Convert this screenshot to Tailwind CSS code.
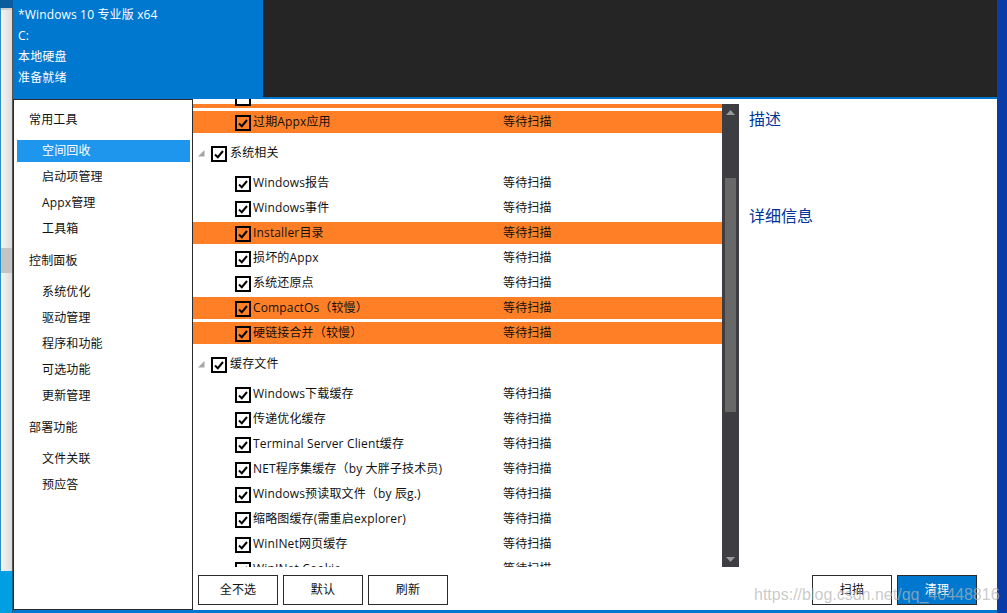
<!DOCTYPE html>
<html lang="zh">
<head>
  <meta charset="UTF-8">
  <title>Dism++</title>
  <script src="https://cdn.jsdelivr.net/npm/@tailwindcss/browser@4"></script>
</head>
<body class="bg-[#0078d0]">
  <div class="relative flex w-[1007px] h-[613px] overflow-hidden text-[12px] tracking-[0.15px] text-[#111] font-['Open_Sans','Noto_Sans_CJK_SC',sans-serif]">

    <!-- desktop behind, left edge -->
    <div class="w-[13px] flex flex-col">
      <div class="h-[8px] bg-[#0b5c9c]"></div>
      <div class="h-[563px] flex flex-col border-l border-r border-l-[#2a8fc4] border-r-[#555]">
        <div class="h-[240px] bg-gradient-to-r from-[#f4f4f4] to-[#dcdcdc] border-t-2 border-[#cfcfcf]"></div>
        <div class="h-[25px] bg-[#c4c4c4]"></div>
        <div class="flex-1 bg-gradient-to-r from-[#f4f4f4] to-[#dcdcdc]"></div>
      </div>
      <div class="flex-1 bg-[#009fe3] border-r border-[#1c5f80]"></div>
    </div>

    <div class="w-[984px] flex flex-col">
      <!-- header -->
      <div class="h-[99px] flex">
        <div class="w-[250px] bg-[#0078d0] text-white pl-[5px] pt-[4px]">
          <div class="h-[21px] leading-[21px]">*Windows 10 专业版 x64</div>
          <div class="h-[21px] leading-[21px]">C:</div>
          <div class="h-[21px] leading-[21px]">本地硬盘</div>
          <div class="h-[21px] leading-[21px]">准备就绪</div>
        </div>
        <div class="flex-1 bg-[#252525] border-b-2 border-[#0078d0]"></div>
      </div>

      <div class="h-[511px] flex bg-white">
        <!-- sidebar -->
        <div class="w-[180px] border border-[#2b2b2b] pt-[7px]">
          <div class="h-[26px] leading-[26px] pl-[15px] mb-[5px]">常用工具</div>
          <div class="h-[26px] py-[2px] pl-[3px] pr-[2px]"><div class="h-[22px] leading-[22px] pl-[25px] bg-[#1f96ee] text-white">空间回收</div></div>
          <div class="h-[26px] leading-[26px] pl-[28px]">启动项管理</div>
          <div class="h-[26px] leading-[26px] pl-[28px]">Appx管理</div>
          <div class="h-[26px] leading-[26px] pl-[28px]">工具箱</div>
          <div class="h-[26px] leading-[26px] pl-[15px] mt-[6px] mb-[5px]">控制面板</div>
          <div class="h-[26px] leading-[26px] pl-[28px]">系统优化</div>
          <div class="h-[26px] leading-[26px] pl-[28px]">驱动管理</div>
          <div class="h-[26px] leading-[26px] pl-[28px]">程序和功能</div>
          <div class="h-[26px] leading-[26px] pl-[28px]">可选功能</div>
          <div class="h-[26px] leading-[26px] pl-[28px]">更新管理</div>
          <div class="h-[26px] leading-[26px] pl-[15px] mt-[6px] mb-[5px]">部署功能</div>
          <div class="h-[26px] leading-[26px] pl-[28px]">文件关联</div>
          <div class="h-[26px] leading-[26px] pl-[28px]">预应答</div>
        </div>

        <!-- main -->
        <div class="flex-1 flex flex-col">
          <div class="h-[468px] flex">
            <!-- tree list -->
            <div class="w-[529px] overflow-hidden">
              <div class="h-[5px] pl-[42px]"><div class="relative w-[16px] h-[7px] border-2 border-t-0 border-black"></div></div>
              <div class="h-[4px] mb-[3px] bg-[#ff7f27]"></div>

              <div class="h-[22px] mb-[3px] flex items-center bg-[#ff7f27]">
                <span class="ml-[42px] mt-[2px] w-[16px] h-[16px] border-2 border-black flex items-center justify-center"><svg width="12" height="12" viewBox="0 0 12 12" fill="none" stroke="#000" stroke-width="2"><path d="M2 6.5 L4.8 9.2 L10 3"/></svg></span>
                <span class="ml-[2px] w-[250px]">过期Appx应用</span><span>等待扫描</span>
              </div>

              <div class="h-[36px] pb-[2px] flex items-center">
                <svg class="ml-[4px]" width="8" height="8" viewBox="0 0 8 8" fill="#a6a6a6"><path d="M7.5 1 V7.5 H1 Z"/></svg>
                <span class="ml-[6px] mt-[2px] w-[16px] h-[16px] border-2 border-black flex items-center justify-center"><svg width="12" height="12" viewBox="0 0 12 12" fill="none" stroke="#000" stroke-width="2"><path d="M2 6.5 L4.8 9.2 L10 3"/></svg></span>
                <span class="ml-[3px]">系统相关</span>
              </div>

              <div class="h-[22px] mb-[3px] flex items-center">
                <span class="ml-[42px] mt-[2px] w-[16px] h-[16px] border-2 border-black flex items-center justify-center"><svg width="12" height="12" viewBox="0 0 12 12" fill="none" stroke="#000" stroke-width="2"><path d="M2 6.5 L4.8 9.2 L10 3"/></svg></span>
                <span class="ml-[2px] w-[250px]">Windows报告</span><span>等待扫描</span>
              </div>
              <div class="h-[22px] mb-[3px] flex items-center">
                <span class="ml-[42px] mt-[2px] w-[16px] h-[16px] border-2 border-black flex items-center justify-center"><svg width="12" height="12" viewBox="0 0 12 12" fill="none" stroke="#000" stroke-width="2"><path d="M2 6.5 L4.8 9.2 L10 3"/></svg></span>
                <span class="ml-[2px] w-[250px]">Windows事件</span><span>等待扫描</span>
              </div>
              <div class="h-[22px] mb-[3px] flex items-center bg-[#ff7f27]">
                <span class="ml-[42px] mt-[2px] w-[16px] h-[16px] border-2 border-black flex items-center justify-center"><svg width="12" height="12" viewBox="0 0 12 12" fill="none" stroke="#000" stroke-width="2"><path d="M2 6.5 L4.8 9.2 L10 3"/></svg></span>
                <span class="ml-[2px] w-[250px]">Installer目录</span><span>等待扫描</span>
              </div>
              <div class="h-[22px] mb-[3px] flex items-center">
                <span class="ml-[42px] mt-[2px] w-[16px] h-[16px] border-2 border-black flex items-center justify-center"><svg width="12" height="12" viewBox="0 0 12 12" fill="none" stroke="#000" stroke-width="2"><path d="M2 6.5 L4.8 9.2 L10 3"/></svg></span>
                <span class="ml-[2px] w-[250px]">损坏的Appx</span><span>等待扫描</span>
              </div>
              <div class="h-[22px] mb-[3px] flex items-center">
                <span class="ml-[42px] mt-[2px] w-[16px] h-[16px] border-2 border-black flex items-center justify-center"><svg width="12" height="12" viewBox="0 0 12 12" fill="none" stroke="#000" stroke-width="2"><path d="M2 6.5 L4.8 9.2 L10 3"/></svg></span>
                <span class="ml-[2px] w-[250px]">系统还原点</span><span>等待扫描</span>
              </div>
              <div class="h-[22px] mb-[3px] flex items-center bg-[#ff7f27]">
                <span class="ml-[42px] mt-[2px] w-[16px] h-[16px] border-2 border-black flex items-center justify-center"><svg width="12" height="12" viewBox="0 0 12 12" fill="none" stroke="#000" stroke-width="2"><path d="M2 6.5 L4.8 9.2 L10 3"/></svg></span>
                <span class="ml-[2px] w-[250px]">CompactOs（较慢）</span><span>等待扫描</span>
              </div>
              <div class="h-[22px] mb-[3px] flex items-center bg-[#ff7f27]">
                <span class="ml-[42px] mt-[2px] w-[16px] h-[16px] border-2 border-black flex items-center justify-center"><svg width="12" height="12" viewBox="0 0 12 12" fill="none" stroke="#000" stroke-width="2"><path d="M2 6.5 L4.8 9.2 L10 3"/></svg></span>
                <span class="ml-[2px] w-[250px]">硬链接合并（较慢）</span><span>等待扫描</span>
              </div>

              <div class="h-[36px] pb-[2px] flex items-center">
                <svg class="ml-[4px]" width="8" height="8" viewBox="0 0 8 8" fill="#a6a6a6"><path d="M7.5 1 V7.5 H1 Z"/></svg>
                <span class="ml-[6px] mt-[2px] w-[16px] h-[16px] border-2 border-black flex items-center justify-center"><svg width="12" height="12" viewBox="0 0 12 12" fill="none" stroke="#000" stroke-width="2"><path d="M2 6.5 L4.8 9.2 L10 3"/></svg></span>
                <span class="ml-[3px]">缓存文件</span>
              </div>

              <div class="h-[22px] mb-[3px] flex items-center">
                <span class="ml-[42px] mt-[2px] w-[16px] h-[16px] border-2 border-black flex items-center justify-center"><svg width="12" height="12" viewBox="0 0 12 12" fill="none" stroke="#000" stroke-width="2"><path d="M2 6.5 L4.8 9.2 L10 3"/></svg></span>
                <span class="ml-[2px] w-[250px]">Windows下载缓存</span><span>等待扫描</span>
              </div>
              <div class="h-[22px] mb-[3px] flex items-center">
                <span class="ml-[42px] mt-[2px] w-[16px] h-[16px] border-2 border-black flex items-center justify-center"><svg width="12" height="12" viewBox="0 0 12 12" fill="none" stroke="#000" stroke-width="2"><path d="M2 6.5 L4.8 9.2 L10 3"/></svg></span>
                <span class="ml-[2px] w-[250px]">传递优化缓存</span><span>等待扫描</span>
              </div>
              <div class="h-[22px] mb-[3px] flex items-center">
                <span class="ml-[42px] mt-[2px] w-[16px] h-[16px] border-2 border-black flex items-center justify-center"><svg width="12" height="12" viewBox="0 0 12 12" fill="none" stroke="#000" stroke-width="2"><path d="M2 6.5 L4.8 9.2 L10 3"/></svg></span>
                <span class="ml-[2px] w-[250px]">Terminal Server Client缓存</span><span>等待扫描</span>
              </div>
              <div class="h-[22px] mb-[3px] flex items-center">
                <span class="ml-[42px] mt-[2px] w-[16px] h-[16px] border-2 border-black flex items-center justify-center"><svg width="12" height="12" viewBox="0 0 12 12" fill="none" stroke="#000" stroke-width="2"><path d="M2 6.5 L4.8 9.2 L10 3"/></svg></span>
                <span class="ml-[2px] w-[250px]">NET程序集缓存（by 大胖子技术员)</span><span>等待扫描</span>
              </div>
              <div class="h-[22px] mb-[3px] flex items-center">
                <span class="ml-[42px] mt-[2px] w-[16px] h-[16px] border-2 border-black flex items-center justify-center"><svg width="12" height="12" viewBox="0 0 12 12" fill="none" stroke="#000" stroke-width="2"><path d="M2 6.5 L4.8 9.2 L10 3"/></svg></span>
                <span class="ml-[2px] w-[250px]">Windows预读取文件（by 辰g.)</span><span>等待扫描</span>
              </div>
              <div class="h-[22px] mb-[3px] flex items-center">
                <span class="ml-[42px] mt-[2px] w-[16px] h-[16px] border-2 border-black flex items-center justify-center"><svg width="12" height="12" viewBox="0 0 12 12" fill="none" stroke="#000" stroke-width="2"><path d="M2 6.5 L4.8 9.2 L10 3"/></svg></span>
                <span class="ml-[2px] w-[250px]">缩略图缓存(需重启explorer)</span><span>等待扫描</span>
              </div>
              <div class="h-[22px] mb-[3px] flex items-center">
                <span class="ml-[42px] mt-[2px] w-[16px] h-[16px] border-2 border-black flex items-center justify-center"><svg width="12" height="12" viewBox="0 0 12 12" fill="none" stroke="#000" stroke-width="2"><path d="M2 6.5 L4.8 9.2 L10 3"/></svg></span>
                <span class="ml-[2px] w-[250px]">WinINet网页缓存</span><span>等待扫描</span>
              </div>
              <div class="h-[22px] mb-[3px] flex items-center">
                <span class="ml-[42px] mt-[2px] w-[16px] h-[16px] border-2 border-black flex items-center justify-center"><svg width="12" height="12" viewBox="0 0 12 12" fill="none" stroke="#000" stroke-width="2"><path d="M2 6.5 L4.8 9.2 L10 3"/></svg></span>
                <span class="ml-[2px] w-[250px]">WinINet Cookie</span><span>等待扫描</span>
              </div>
            </div>

            <!-- scrollbar -->
            <div class="w-[17px] mt-[5px] bg-[#3e3e42] flex flex-col items-center">
              <div class="h-[74px] pt-[6px]"><svg class="block" width="9" height="5" viewBox="0 0 9 5" fill="#999"><path d="M4.5 0 L9 5 H0 Z"/></svg></div>
              <div class="w-[11px] h-[234px] bg-[#686868]"></div>
              <div class="flex-1"></div>
              <div class="pb-[5px]"><svg class="block" width="9" height="5" viewBox="0 0 9 5" fill="#999"><path d="M0 0 H9 L4.5 5 Z"/></svg></div>
            </div>

            <!-- description -->
            <div class="flex-1 pl-[10px] pt-[8px] text-[16px] tracking-normal leading-[24px] text-[#003399]">
              <div>描述</div>
              <div class="mt-[73px]">详细信息</div>
            </div>
          </div>

          <!-- buttons -->
          <div class="flex-1 flex pl-[5px] pr-[20px] pt-[8px] gap-[5px]">
            <div class="w-[80px] h-[30px] border border-[#2b2b2b] flex items-center justify-center">全不选</div>
            <div class="w-[80px] h-[30px] border border-[#2b2b2b] flex items-center justify-center">默认</div>
            <div class="w-[80px] h-[30px] border border-[#2b2b2b] flex items-center justify-center">刷新</div>
            <div class="flex-1"></div>
            <div class="w-[80px] h-[30px] border border-[#2b2b2b] flex items-center justify-center">扫描</div>
            <div class="w-[80px] h-[30px] border border-[#2b2b2b] bg-[#0078d0] text-white flex items-center justify-center">清理</div>
          </div>
        </div>
      </div>
      <div class="flex-1 bg-[#0078d0]"></div>
    </div>

    <div class="w-[10px] bg-[#0a3ca8]"></div>

    <!-- watermark over the page -->
    <div class="absolute left-[754px] top-[583px] text-[16px] tracking-normal leading-[24px] whitespace-nowrap text-[#b4b4b4]/70 font-['Liberation_Sans',sans-serif]">https://blog.csdn.net/qq_40448816</div>
  </div>
</body>
</html>
